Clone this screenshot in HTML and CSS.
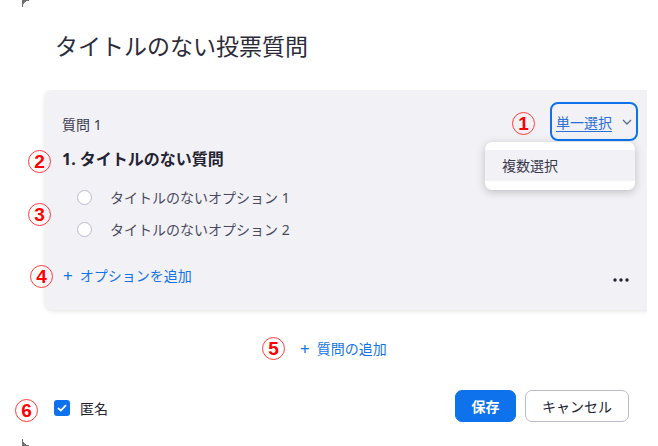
FILE: index.html
```html
<!DOCTYPE html>
<html lang="ja">
  <head>
    <meta charset="UTF-8" />
    <meta name="viewport" content="width=device-width, initial-scale=1.0" />
    <title>投票</title>
    <link rel="stylesheet" href="styles.css">
  </head>
  <body>
    <section class="poll">
      <span class="poll__corner poll__corner--top"></span>
      <span class="poll__corner poll__corner--bottom"></span>

      <h1 class="poll__title">タイトルのない投票質問</h1>

      <div class="poll__body">
        <div class="poll__card">
          <div class="card__head">
            <span class="card__label">質問 1</span>
            <div class="card__select">
              <button class="select__button" type="button">
                <span class="select__text">単一選択</span>
                <svg width="10" height="6" viewBox="0 0 10 6">
                  <polyline points="1,1 5,5 9,1" fill="none" stroke="#5b6a85" stroke-width="1.3" />
                </svg>
              </button>
              <div class="select__menu">
                <div class="select__item">複数選択</div>
              </div>
            </div>
          </div>

          <h2 class="card__question">1. タイトルのない質問</h2>

          <ul class="card__options">
            <li class="option"><span class="option__radio"></span>タイトルのないオプション 1</li>
            <li class="option"><span class="option__radio"></span>タイトルのないオプション 2</li>
          </ul>

          <div class="card__foot">
            <a class="link" href="#"><span class="link__plus">+</span>オプションを追加</a>
            <svg class="card__more" width="16" height="4" viewBox="0 0 16 4">
              <circle cx="2" cy="2" r="1.7" fill="#232333" />
              <circle cx="8" cy="2" r="1.7" fill="#232333" />
              <circle cx="14" cy="2" r="1.7" fill="#232333" />
            </svg>
          </div>
        </div>
      </div>

      <div class="poll__add">
        <a class="link" href="#"><span class="link__plus">+</span>質問の追加</a>
      </div>

      <div class="poll__footer">
        <label class="check">
          <span class="check__box">
            <svg width="10" height="8" viewBox="0 0 10 8">
              <polyline points="1,4 3.8,6.6 9,1.2" fill="none" stroke="#fff" stroke-width="1.8" />
            </svg>
          </span>
          匿名
        </label>
        <div class="buttons">
          <button class="btn btn--primary" type="button">保存</button>
          <button class="btn" type="button">キャンセル</button>
        </div>
      </div>

      <span class="mark mark--1">1</span>
      <span class="mark mark--2">2</span>
      <span class="mark mark--3">3</span>
      <span class="mark mark--4">4</span>
      <span class="mark mark--5">5</span>
      <span class="mark mark--6">6</span>
    </section>
  </body>
</html>
```

FILE: styles.css
```css
* {
  margin: 0;
  padding: 0;
  box-sizing: border-box;
}
html {
  font-family: "Noto Sans", "Noto Sans CJK JP", sans-serif;
  color: #232333;
}
body {
  background-color: #fff;
  width: 658px;
  height: 446px;
  overflow: hidden;
}
.poll {
  position: relative;
  height: 446px;
  padding-top: 30px;
}
.poll__corner {
  position: absolute;
  left: 22px;
  width: 7px;
  height: 7px;
}
.poll__corner--top {
  top: 0;
  background: radial-gradient(circle at 100% 100%, transparent 6px, #6f6f6f 6.5px);
}
.poll__corner--bottom {
  bottom: 0;
  background: radial-gradient(circle at 100% 0, transparent 6px, #6f6f6f 6.5px);
}
.poll__title {
  padding-left: 55px;
  font-size: 23px;
  line-height: 32px;
  font-weight: 400;
  color: #2b2b3a;
}

.poll__body {
  margin: 28px 11px 0 37px;
  padding: 0 0 10px 8px;
  overflow: hidden;
}
.poll__card {
  position: relative;
  height: 220px;
  margin-right: -12px;
  padding: 12px 21px 0 17px;
  background-color: #f2f2f6;
  border-radius: 8px;
  box-shadow: 0 1px 5px rgba(0, 0, 0, 0.12);
}
.card__head {
  display: flex;
  justify-content: space-between;
  align-items: center;
}
.card__label {
  padding-top: 6px;
  font-size: 14px;
  line-height: 20px;
  color: #39394d;
}
.card__select {
  position: relative;
}
.select__button {
  display: flex;
  align-items: center;
  gap: 10px;
  width: 88px;
  height: 39px;
  padding: 0 0 0 4px;
  border: 2px solid #0e72ed;
  border-radius: 8px;
  background-color: #f2f2f6;
  font-family: inherit;
  font-size: 14px;
  cursor: pointer;
}
.select__text {
  color: #2a6ed8;
  text-decoration: underline;
  text-underline-offset: 3px;
}
.select__menu {
  position: absolute;
  top: 40px;
  right: 3px;
  width: 150px;
  padding: 8px 0 9px;
  background-color: #fff;
  border-radius: 7px;
  box-shadow: 0 2px 8px rgba(0, 0, 0, 0.22);
  z-index: 2;
}
.select__item {
  padding-left: 17px;
  height: 31px;
  line-height: 31px;
  font-size: 14px;
  background-color: #f2f2f6;
  color: #39394d;
}
.card__question {
  margin-top: 7px;
  font-size: 16px;
  line-height: 22px;
  font-weight: 700;
}
.card__options {
  margin-top: 11px;
  list-style: none;
}
.option {
  display: flex;
  align-items: center;
  gap: 18px;
  height: 32px;
  padding-left: 15px;
  font-size: 14px;
  color: #4a4a5c;
}
.option__radio {
  width: 15px;
  height: 15px;
  border: 1px solid #babacc;
  border-radius: 50%;
  background-color: #fff;
}
.card__foot {
  display: flex;
  justify-content: space-between;
  align-items: center;
  margin-top: 21px;
  height: 20px;
}
.card__more {
  margin: 8px 9px 0 0;
}
.link {
  display: flex;
  align-items: center;
  gap: 7px;
  font-size: 14px;
  line-height: 20px;
  color: #1473e6;
  text-decoration: none;
}
.link__plus {
  font-size: 17px;
  padding-left: 1px;
}

.poll__add {
  display: flex;
  margin-top: 19px;
  padding-left: 299px;
}

.poll__footer {
  display: flex;
  justify-content: space-between;
  align-items: center;
  margin-top: 31px;
  padding: 0 29px 0 54px;
}
.check {
  display: flex;
  align-items: center;
  gap: 10px;
  margin-top: 4px;
  font-size: 14px;
  color: #232333;
}
.check__box {
  display: flex;
  justify-content: center;
  align-items: center;
  width: 16px;
  height: 16px;
  border-radius: 3px;
  background-color: #0e72ed;
}
.buttons {
  display: flex;
  gap: 9px;
}
.btn {
  height: 32px;
  padding: 0 16px;
  border: 1px solid #babacc;
  border-radius: 7px;
  background-color: #fff;
  font-family: inherit;
  font-size: 14px;
  color: #232333;
  white-space: nowrap;
  cursor: pointer;
}
.btn--primary {
  width: 61px;
  padding: 0;
  border-color: #0e72ed;
  background-color: #0e72ed;
  color: #fff;
  font-weight: 700;
}

.mark {
  position: absolute;
  display: flex;
  justify-content: center;
  align-items: center;
  width: 23px;
  height: 23px;
  border: 1px solid #ff3b3b;
  border-radius: 50%;
  font-family: "Liberation Sans", sans-serif;
  font-size: 19px;
  font-weight: 700;
  color: #ff0000;
  background-color: transparent;
  z-index: 3;
}
.mark--1 { left: 512px; top: 112px; }
.mark--2 { left: 28px; top: 150px; }
.mark--3 { left: 28px; top: 203px; }
.mark--4 { left: 30px; top: 265px; }
.mark--5 { left: 262px; top: 337px; }
.mark--6 { left: 15px; top: 399px; }
```
